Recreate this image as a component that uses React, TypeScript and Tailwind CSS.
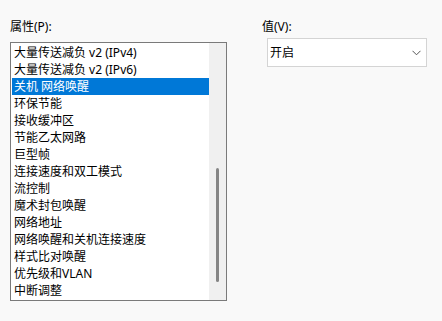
import React from "react";

const items = [
  "大量传送减负 v2 (IPv4)",
  "大量传送减负 v2 (IPv6)",
  "关机 网络唤醒",
  "环保节能",
  "接收缓冲区",
  "节能乙太网路",
  "巨型帧",
  "连接速度和双工模式",
  "流控制",
  "魔术封包唤醒",
  "网络地址",
  "网络唤醒和关机连接速度",
  "样式比对唤醒",
  "优先级和VLAN",
  "中断调整",
];

export default function App() {
  return (
    <div
      className="w-[442px] h-[321px] bg-[#f9f9f9] flex text-[12px] text-black"
      style={{ fontFamily: '"Noto Sans", "Noto Sans CJK SC", sans-serif' }}
    >
      <div className="w-[252px] pl-[10px] pt-[19px] flex flex-col">
        <div className="h-[16px] leading-[16px] mb-[7px]">属性(P):</div>
        <div className="w-[217px] h-[259px] border border-[#7a7a7a] bg-white flex">
          <div className="flex-1 pt-[1px] pl-[1px]">
            {items.map((t, i) => (
              <div
                key={t}
                className={
                  "h-[17px] leading-[17px] pl-[2px] whitespace-nowrap " +
                  (i === 2 ? "bg-[#0078d7] text-white" : "")
                }
              >
                {t}
              </div>
            ))}
          </div>
          <div className="w-[17px] bg-[#f0f0f0] pt-[125px] flex justify-center">
            <div className="w-[3px] h-[114px] bg-[#858585] rounded-full ml-[-1px]" />
          </div>
        </div>
      </div>
      <div className="pl-[10px] pt-[19px] flex flex-col">
        <div className="h-[16px] leading-[16px] mb-[3px]">值(V):</div>
        <div className="ml-[5px] w-[160px] h-[29px] border border-[#d4d4d4] bg-white flex items-center justify-between pl-[2px] pr-[5px]">
          <span>开启</span>
          <svg width="9" height="6" viewBox="0 0 9 6" fill="none">
            <path d="M0.5 0.8 L4.5 4.8 L8.5 0.8" stroke="#555" strokeWidth="1" />
          </svg>
        </div>
      </div>
    </div>
  );
}
